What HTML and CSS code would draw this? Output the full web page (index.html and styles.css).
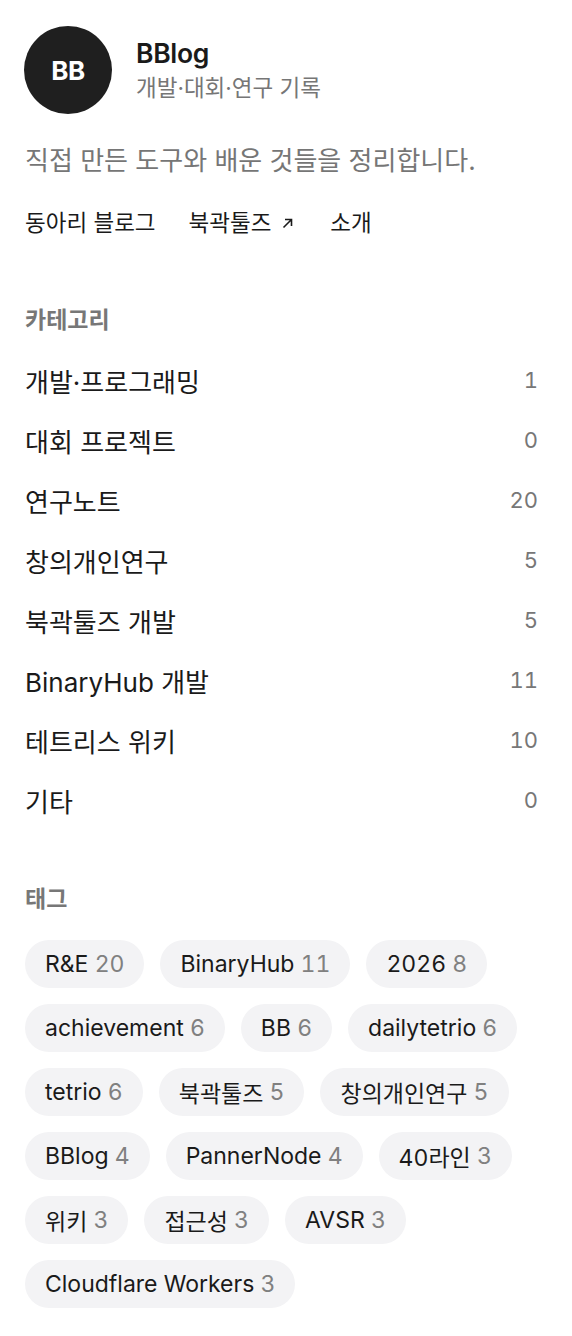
FILE: index.html
```html
<!DOCTYPE html>
<html lang="ko">
<head>
<meta charset="utf-8">
<title>BBlog</title>
<link rel="stylesheet" href="styles.css">
</head>
<body>
<div class="page">
  <header class="profile">
    <div class="avatar">BB</div>
    <div class="profile-text">
      <div class="title">BBlog</div>
      <div class="subtitle">개발·대회·연구 기록</div>
    </div>
  </header>
  <p class="desc">직접 만든 도구와 배운 것들을 정리합니다.</p>
  <nav class="nav">
    <a class="nav-link">동아리 블로그</a>
    <a class="nav-link">북곽툴즈<svg class="ext" width="11" height="11" viewBox="0 0 11 11"><path d="M1.5 9.5 L9.5 1.5 M3 1.5 H9.5 V8" fill="none" stroke="#1a1a1a" stroke-width="1.6"/></svg></a>
    <a class="nav-link">소개</a>
  </nav>

  <section class="cats">
    <h2 class="sec-title">카테고리</h2>
    <ul class="cat-list">
      <li class="cat"><span class="cat-name">개발·프로그래밍</span><span class="cat-count">1</span></li>
      <li class="cat"><span class="cat-name">대회 프로젝트</span><span class="cat-count">0</span></li>
      <li class="cat"><span class="cat-name">연구노트</span><span class="cat-count">20</span></li>
      <li class="cat"><span class="cat-name">창의개인연구</span><span class="cat-count">5</span></li>
      <li class="cat"><span class="cat-name">북곽툴즈 개발</span><span class="cat-count">5</span></li>
      <li class="cat"><span class="cat-name">BinaryHub 개발</span><span class="cat-count">11</span></li>
      <li class="cat"><span class="cat-name">테트리스 위키</span><span class="cat-count">10</span></li>
      <li class="cat"><span class="cat-name">기타</span><span class="cat-count">0</span></li>
    </ul>
  </section>

  <section class="tags">
    <h2 class="sec-title">태그</h2>
    <div class="tag-list">
      <span class="tag">R&amp;E <span class="n">20</span></span>
      <span class="tag">BinaryHub <span class="n">11</span></span>
      <span class="tag">2026 <span class="n">8</span></span>
      <span class="tag">achievement <span class="n">6</span></span>
      <span class="tag">BB <span class="n">6</span></span>
      <span class="tag">dailytetrio <span class="n">6</span></span>
      <span class="tag">tetrio <span class="n">6</span></span>
      <span class="tag">북곽툴즈 <span class="n">5</span></span>
      <span class="tag">창의개인연구 <span class="n">5</span></span>
      <span class="tag">BBlog <span class="n">4</span></span>
      <span class="tag">PannerNode <span class="n">4</span></span>
      <span class="tag">40라인 <span class="n">3</span></span>
      <span class="tag">위키 <span class="n">3</span></span>
      <span class="tag">접근성 <span class="n">3</span></span>
      <span class="tag">AVSR <span class="n">3</span></span>
      <span class="tag">Cloudflare Workers <span class="n">3</span></span>
    </div>
  </section>
</div>
</body>
</html>
```

FILE: styles.css
```css
* { box-sizing: border-box; }
html, body { margin: 0; padding: 0; background: #fff; }
body {
  font-family: Inter, "Noto Sans CJK KR", sans-serif;
  color: #1a1a1a;
}
.page { padding: 26px 24px 29px 25px; }

.profile { display: flex; align-items: center; gap: 24px; }
.avatar {
  width: 88px; height: 88px; border-radius: 50%;
  background: #1f1f1f; color: #fff;
  display: flex; align-items: center; justify-content: center;
  font-size: 26px; font-weight: 700; letter-spacing: -0.5px;
  flex: none; margin-left: -1px;
}
.profile-text { display: flex; flex-direction: column; gap: 4px; }
.title { font-size: 26.5px; font-weight: 600; line-height: 32px; letter-spacing: -0.3px; }
.subtitle { font-size: 22.5px; line-height: 30px; color: #767676; }

.desc { margin: 31px 0 0; font-size: 26px; line-height: 32px; color: #767676; }

.nav { display: flex; gap: 33px; margin-top: 31px; }
.nav-link { font-size: 22.5px; line-height: 30px; color: #1a1a1a; display: flex; align-items: center; }
.ext { margin-left: 11px; margin-right: 4px; }

.sec-title { margin: 0; font-size: 23px; line-height: 30px; font-weight: 600; color: #777; }
.cats { margin-top: 67px; }
.cat-list { list-style: none; margin: 15px 0 0; padding: 0; }
.cat { display: flex; justify-content: space-between; align-items: center; height: 60px; padding-right: 10px; }
.cat-name { font-size: 26px; color: #1a1a1a; }
.cat-count { font-size: 22px; color: #777; font-feature-settings: "tnum" 1; }

.tags { margin-top: 54px; }
.tag-list { display: flex; flex-wrap: wrap; gap: 16px; margin-top: 26px; }
.tag {
  height: 48px; padding: 0 20px; border-radius: 24px;
  background: #f3f3f5; display: flex; align-items: center;
  font-size: 23px; color: #1a1a1a; white-space: pre;
  font-feature-settings: "tnum" 1;
}
.tag .n { color: #808080; }
```
